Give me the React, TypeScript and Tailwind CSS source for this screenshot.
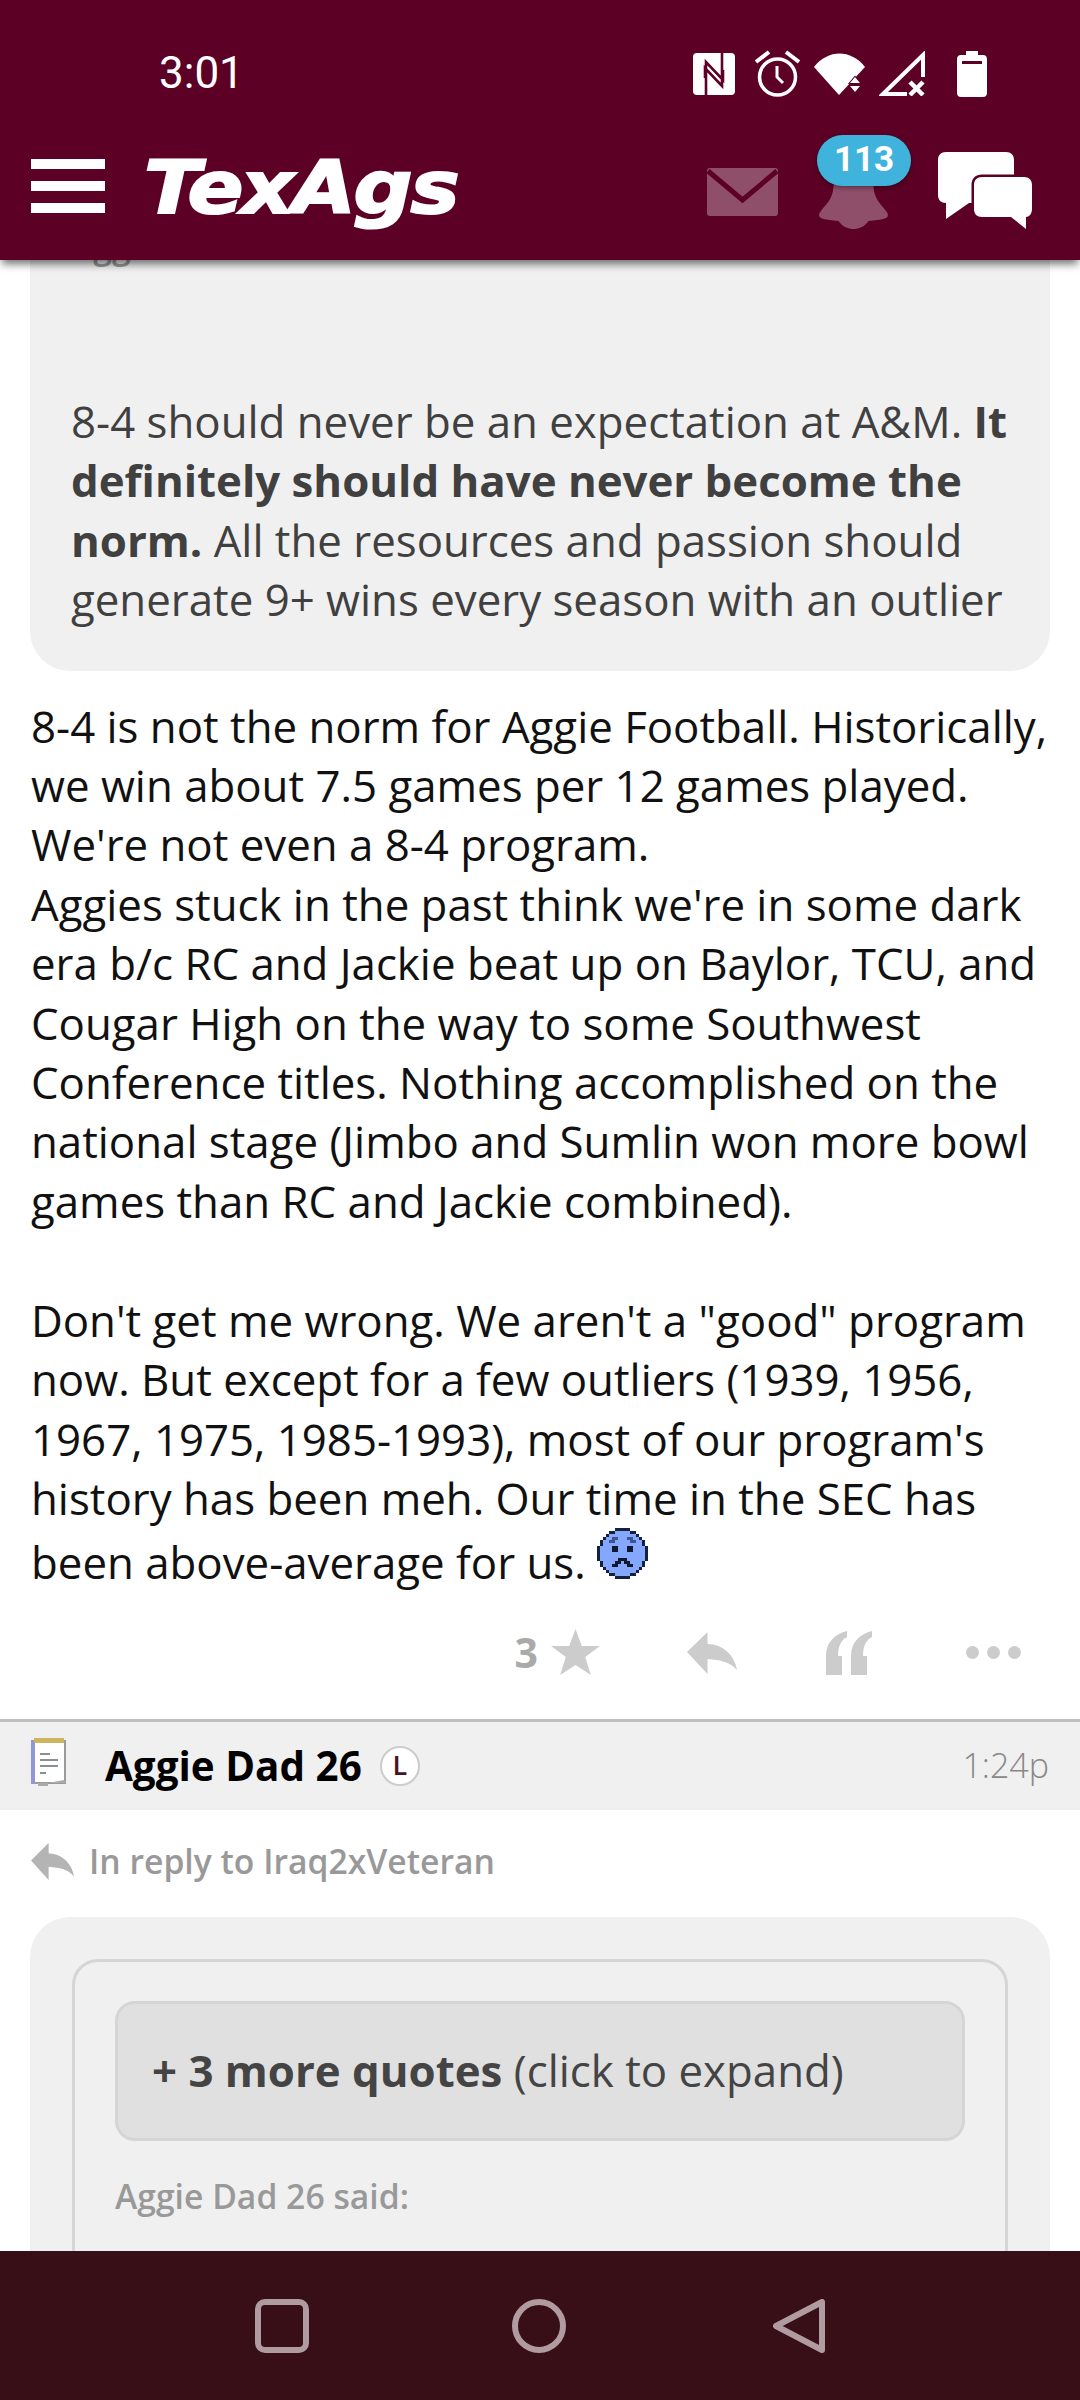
import React from 'react';

const maroon = '#5c0026';

const StatusIcons = () => (
  <div className="flex items-center">
    {/* nfc */}
    <svg width="42" height="42" viewBox="0 0 42 42">
      <rect width="42" height="42" rx="4" fill="#fff" />
      <path d="M13 42 V9 L30 27 V17 M29 0 V33 L12 15 V25" fill="none" stroke={maroon} strokeWidth="2.6" />
    </svg>
    {/* alarm */}
    <svg className="ml-[20px]" width="45" height="47" viewBox="0 0 45 47" fill="none" stroke="#fff">
      <circle cx="22.500" cy="27" r="18" strokeWidth="3.500" />
      <path d="M22 16 V27 L28 33" strokeWidth="3" />
      <path d="M1 12 L14 2 M44 12 L31 2" strokeWidth="4" />
    </svg>
    {/* wifi with up/down arrows */}
    <svg className="ml-[14px]" width="51" height="42" viewBox="0 0 51 42" fill="#fff">
      <path d="M0 14 C14 -4 37 -4 51 14 L25 42 Z" />
      <path d="M36 30 L46 30 L41 24 Z M36 33 L46 33 L41 39 Z" stroke={maroon} strokeWidth="2" paintOrder="stroke" />
    </svg>
    {/* signal no sim */}
    <svg className="ml-[14px]" width="46" height="45" viewBox="0 0 46 45" fill="none" stroke="#fff">
      <path d="M44 26 V4 L4 43 H28" strokeWidth="4" />
      <path d="M31 31 L44 44 M44 31 L31 44" strokeWidth="4.500" />
    </svg>
    {/* battery */}
    <svg className="ml-[32px]" width="30" height="46" viewBox="0 0 30 46">
      <path d="M9 0 H21 V4 H26 C28.500 4 30 5.500 30 8 V42 C30 44.500 28.500 46 26 46 H4 C1.500 46 0 44.500 0 42 V8 C0 5.500 1.500 4 4 4 H9 Z" fill="#fff" />
      <rect x="5" y="10" width="20" height="3" fill={maroon} />
    </svg>
  </div>
);

const Header = () => (
  <header className="relative z-10 h-[260px] shrink-0 bg-[#5c0026] shadow-[0_6px_8px_-2px_rgba(0,0,0,0.55)]">
    <div className="flex h-[146px] items-start justify-between pl-[159px] pr-[93px] pt-[50px]">
      <span className="font-['Roboto',sans-serif] text-[44px] leading-[46px] text-white">3:01</span>
      <StatusIcons />
    </div>
    <div className="flex items-start pl-[31px] pr-[48px]">
      <div className="mt-[13px] flex w-[74px] shrink-0 flex-col gap-[12px]">
        <div className="h-[10px] bg-white" />
        <div className="h-[10px] bg-white" />
        <div className="h-[10px] bg-white" />
      </div>
      <span className="ml-[39px] origin-left scale-x-[1.13] font-['DejaVu_Sans',sans-serif] text-[73px] font-bold italic leading-[84px] tracking-[-2px] text-white [-webkit-text-stroke:2px_white]">
        TexAgs
      </span>
      <div className="ml-auto mt-[22px]">
        <svg width="71" height="48" viewBox="0 0 71 48">
          <rect width="71" height="48" rx="3" fill="#8f4e6a" />
          <path d="M1 3 L35.500 32 L70 3" fill="none" stroke={maroon} strokeWidth="5" />
        </svg>
      </div>
      <div className="relative ml-[40px] mt-[19px] h-[64px] w-[71px]">
        <svg width="71" height="64" viewBox="0 0 70 64">
          <path d="M35 0 C22 0 16 10 15 22 C14 36 6 40 1 48 C-1 54 4 54 20 56 C24 62 30 64 35 64 C40 64 46 62 50 56 C66 54 71 54 69 48 C64 40 56 36 55 22 C54 10 48 0 35 0 Z" fill="#8f4e6a" />
        </svg>
        <span className="absolute left-[-1px] top-[-30px] flex h-[51px] w-[94px] items-center justify-center rounded-full bg-[#3fb3dc] font-['Roboto',sans-serif] text-[35px] font-bold text-white shadow-[0_2px_4px_rgba(0,0,0,0.35)]">
          113
        </span>
      </div>
      <div className="ml-[49px] mt-[6px]">
        <svg width="94" height="78" viewBox="0 0 94 78">
          <path d="M8 0 H68 C73 0 76 3 76 8 V43 C76 48 73 51 68 51 H31 L8 67 V51 C3 51 0 48 0 43 V8 C0 3 3 0 8 0 Z" fill="#fff" />
          <path d="M44 25 H86 C91 25 94 28 94 33 V57 C94 62 91 65 88 65 V77 L73 65 H44 C39 65 36 62 36 57 V33 C36 28 39 25 44 25 Z" fill="#fff" stroke={maroon} strokeWidth="5" paintOrder="stroke" />
        </svg>
      </div>
    </div>
  </header>
);

const Smiley = () => (
  <svg className="inline-block align-baseline" width="51" height="51" viewBox="0 0 17 17" shapeRendering="crispEdges">
    <path d="M6 0 H11 V1 H13 V2 H14 V3 H15 V4 H16 V6 H17 V11 H16 V13 H15 V14 H14 V15 H13 V16 H11 V17 H6 V16 H4 V15 H3 V14 H2 V13 H1 V11 H0 V6 H1 V4 H2 V3 H3 V2 H4 V1 H6 Z" fill="#14213f" />
    <path d="M6 1 H11 V2 H13 V3 H14 V4 H15 V6 H16 V11 H15 V13 H14 V14 H13 V15 H11 V16 H6 V15 H4 V14 H3 V13 H2 V11 H1 V6 H2 V4 H3 V3 H4 V2 H6 Z" fill="#84a8ff" />
    <path d="M5 6 H7 V8 H5 Z M10 6 H12 V8 H10 Z" fill="#10182f" />
    <path d="M5 12 H6 V11 H7 V10 H10 V11 H11 V12 H12 V13 H10 V12 H9 V11 H8 V12 H7 V13 H5 Z" fill="#10182f" />
    <path d="M4 4 H5 V3 H7 V4 H6 V5 H4 Z M10 3 H12 V4 H13 V5 H11 V4 H10 Z" fill="#3e5590" />
  </svg>
);

const ReplyArrow = ({ width, height, fill }: { width: number; height: number; fill: string }) => (
  <svg width={width} height={height} viewBox="0 0 50 42" preserveAspectRatio="none">
    <path d="M0 20 L20.500 0 V12 C36 12 48 24 50 38 C43 30 34 28 20.500 27 V42 Z" fill={fill} />
  </svg>
);

const Actions = () => (
  <div className="flex h-[126px] items-center justify-end pb-[6px] pr-[59px]">
    <span className="text-[41px] font-bold leading-none text-[#aaa]">3</span>
    <svg className="ml-[13px]" width="49" height="47" viewBox="0 0 43 47" preserveAspectRatio="none">
      <path d="M21.500 0 L27 17 H43 L30 28 L35 46 L21.500 36 L8 46 L13 28 L0 17 H16 Z" fill="#ccc" />
    </svg>
    <div className="ml-[87px]">
      <ReplyArrow width={50} height={42} fill="#ccc" />
    </div>
    <svg className="ml-[89px]" width="46" height="44" viewBox="0 0 46 44" fill="#ccc">
      <path d="M0 44 V25 C0 11 9 3 21 0 V6 C15 9 12 15 12 25 H16 V44 Z" />
      <path d="M25 44 V25 C25 11 34 3 46 0 V6 C40 9 37 15 37 25 H41 V44 Z" />
    </svg>
    <div className="ml-[94px] flex gap-[8px]">
      <div className="h-[13px] w-[13px] rounded-full bg-[#ccc]" />
      <div className="h-[13px] w-[13px] rounded-full bg-[#ccc]" />
      <div className="h-[13px] w-[13px] rounded-full bg-[#ccc]" />
    </div>
  </div>
);

const PostHead = () => (
  <div className="flex h-[91px] items-center border-t-[3px] border-[#c0c0c0] bg-[#f0f0f0] pl-[30px] pr-[31px]">
    <svg className="mb-[6px] shrink-0" width="37" height="51" viewBox="0 0 37 51">
      <rect x="2" y="4" width="33" height="42" fill="#fff" stroke="#9a9a9a" strokeWidth="2" />
      <rect x="1" y="4" width="4" height="43" fill="#8f97d8" />
      <rect x="4" y="1" width="30" height="5" fill="#cdb560" />
      <path d="M10 17 H20 M10 23 H28 M10 29 H28 M10 36 H16" stroke="#8a9096" strokeWidth="2" />
      <path d="M8 46 H36 L34 43 L18 46 V49 H8 Z" fill="#aaa" />
    </svg>
    <span className="ml-[38px] text-[40.400px] font-bold leading-none text-black">Aggie Dad 26</span>
    <span className="ml-[18px] flex h-[40px] w-[40px] items-center justify-center rounded-full border-2 border-[#ccc] bg-white text-[27px] font-semibold text-[#4a1226]">
      L
    </span>
    <span className="ml-auto text-[34px] font-light text-[#888]">1:24p</span>
  </div>
);

export default function App() {
  return (
    <div className="flex h-[2400px] w-[1080px] flex-col overflow-hidden bg-white font-['Open_Sans',sans-serif]">
      <Header />
      <main className="min-h-0 flex-1 overflow-hidden">
        <blockquote className="mx-[30px] mt-[-36px] rounded-b-[40px] bg-[#f0f0f0] px-[41px] pb-[41px]">
          <div className="h-[47px] text-[33.700px] font-semibold leading-[44px] text-[#999]">Aggie Dad 26 said:</div>
          <p className="mt-[121px] text-[43.800px] leading-[59.4px] text-[#404040]">
            8-4 should never be an expectation at A&amp;M. <b className="font-bold">It definitely should have never become the norm.</b> All the resources and passion should generate 9+ wins every season with an outlier
          </p>
        </blockquote>
        <div className="mt-[26px] px-[31px] text-[43.800px] leading-[59.4px] text-[#111]">
          8-4 is not the norm for Aggie Football. Historically, we win about 7.5 games per 12 games played. We're not even a 8-4 program.
          <br />
          Aggies stuck in the past think we're in some dark era b/c RC and Jackie beat up on Baylor, TCU, and Cougar High on the way to some Southwest Conference titles. Nothing accomplished on the national stage (Jimbo and Sumlin won more bowl games than RC and Jackie combined).
          <br />
          <br />
          Don't get me wrong. We aren't a "good" program now. But except for a few outliers (1939, 1956, 1967, 1975, 1985-1993), most of our program's history has been meh. Our time in the SEC has been above-average for us. <Smiley />
        </div>
        <Actions />
        <PostHead />
        <div className="flex h-[107px] items-center pb-[3px] pl-[31px]">
          <ReplyArrow width={43} height={37} fill="#b4b4b4" />
          <span className="ml-[15px] text-[33.700px] font-semibold text-[#999]">In reply to Iraq2xVeteran</span>
        </div>
        <div className="mx-[30px] rounded-t-[40px] bg-[#f0f0f0] px-[42px] pb-[40px] pt-[42px]">
          <div className="rounded-[26px] border-[3px] border-[#d5d5d5] px-[40px] pb-[140px] pt-[39px]">
            <div className="flex h-[140px] items-center rounded-[20px] border-[3px] border-[#d5d5d5] bg-[#e0e0e0] px-[34px] text-[43.800px] text-[#444]">
              <span><b className="font-bold">+ 3 more quotes</b> (click to expand)</span>
            </div>
            <div className="mt-[30px] text-[33.700px] font-semibold text-[#999]">Aggie Dad 26 said:</div>
          </div>
        </div>
      </main>
      <nav className="flex h-[149px] shrink-0 items-start bg-[#380f17] pl-[255px] pt-[48px]">
        <svg width="54" height="54" viewBox="0 0 54 54" fill="none" stroke="#b09ca0" strokeWidth="6">
          <rect x="3" y="3" width="48" height="48" rx="7" />
        </svg>
        <svg className="ml-[203px]" width="54" height="54" viewBox="0 0 54 54" fill="none" stroke="#b09ca0" strokeWidth="6">
          <circle cx="27" cy="27" r="24" />
        </svg>
        <svg className="ml-[207px]" width="52" height="54" viewBox="0 0 52 54" fill="none" stroke="#b09ca0" strokeWidth="6" strokeLinejoin="round">
          <path d="M49 3 V51 L3 27 Z" />
        </svg>
      </nav>
    </div>
  );
}
